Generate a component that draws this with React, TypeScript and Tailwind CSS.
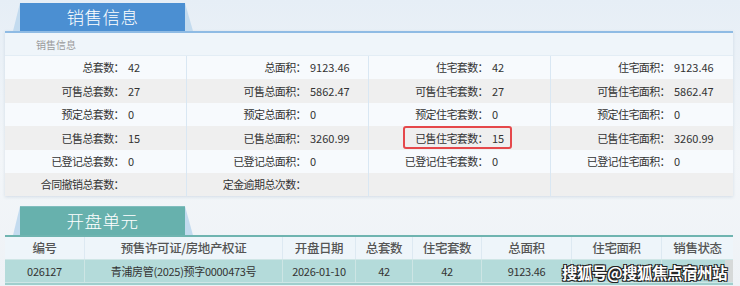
import type { ReactNode } from 'react';

type Cell = { label: string; value: string };

const salesRows: Cell[][] = [
  [
    { label: '总套数：', value: '42' },
    { label: '总面积：', value: '9123.46' },
    { label: '住宅套数：', value: '42' },
    { label: '住宅面积：', value: '9123.46' },
  ],
  [
    { label: '可售总套数：', value: '27' },
    { label: '可售总面积：', value: '5862.47' },
    { label: '可售住宅套数：', value: '27' },
    { label: '可售住宅面积：', value: '5862.47' },
  ],
  [
    { label: '预定总套数：', value: '0' },
    { label: '预定总面积：', value: '0' },
    { label: '预定住宅套数：', value: '0' },
    { label: '预定住宅面积：', value: '0' },
  ],
  [
    { label: '已售总套数：', value: '15' },
    { label: '已售总面积：', value: '3260.99' },
    { label: '已售住宅套数：', value: '15' },
    { label: '已售住宅面积：', value: '3260.99' },
  ],
  [
    { label: '已登记总套数：', value: '0' },
    { label: '已登记总面积：', value: '0' },
    { label: '已登记住宅套数：', value: '0' },
    { label: '已登记住宅面积：', value: '0' },
  ],
  [
    { label: '合同撤销总套数：', value: '' },
    { label: '定金逾期总次数：', value: '' },
    { label: '', value: '' },
    { label: '', value: '' },
  ],
];

const unitCols = [
  { title: '编号', width: 'w-[80px]', value: '026127' },
  { title: '预售许可证/房地产权证', width: 'w-[198px]', value: '青浦房管(2025)预字0000473号' },
  { title: '开盘日期', width: 'w-[73px]', value: '2026-01-10' },
  { title: '总套数', width: 'w-[57px]', value: '42' },
  { title: '住宅套数', width: 'w-[69px]', value: '42' },
  { title: '总面积', width: 'w-[90px]', value: '9123.46' },
  { title: '住宅面积', width: 'w-[90px]', value: '' },
  { title: '销售状态', width: 'w-[71px]', value: '' },
];

function Tab({ title, tone }: { title: string; tone: 'blue' | 'teal' }) {
  return (
    <div className="pl-[8px]">
      <div className="w-[180px] h-full bg-[#c3dbef] [clip-path:polygon(7px_0,172px_0,180px_100%,0_100%)] pl-[7px] pr-[8px]">
        <div
          className={
            tone === 'blue'
              ? 'h-full bg-[#4b8fd2] flex items-center justify-center text-white text-[17.5px] font-light tracking-[0.5px]'
              : 'h-full bg-[#67b1ad] flex items-center justify-center text-white text-[17.5px] font-light tracking-[0.5px]'
          }
        >
          {title}
        </div>
      </div>
    </div>
  );
}

function InfoCell({ cell, last, children }: { cell: Cell; last: boolean; children?: ReactNode }) {
  return (
    <div className={last ? 'relative flex w-[182px] items-center' : 'relative flex w-[182px] items-center border-r border-[#d9e7f3]'}>
      <div className="w-[119px] text-right tracking-[-0.6px] text-[#333]">{cell.label}</div>
      <div className="pl-[4px] text-[#333]">{cell.value}</div>
      {children}
    </div>
  );
}

export default function App() {
  return (
    <div className="w-[740px] h-[286px] overflow-hidden bg-[linear-gradient(180deg,#e6eef6_0%,#f3f6f9_55%,#eef2f6_100%)] pt-[3px] pl-[5px] font-['Noto_Sans_CJK_SC','Noto_Sans',sans-serif] text-[11px]">
      {/* 销售信息 */}
      <div className="h-[28px] flex">
        <Tab title="销售信息" tone="blue" />
      </div>
      <div className="w-[728px] border-t-2 border-[#8fbbe4] bg-[#f7fafd] shadow-[0_1px_3px_rgba(120,150,180,0.25)]">
        <div className="h-[23px] flex items-center pl-[31px] text-[10px] text-[#9a9a9a] bg-[#eff5fa] border-b border-[#e3edf5]">
          销售信息
        </div>
        {salesRows.map((row, r) => (
          <div key={r} className={r % 2 === 1 ? 'flex h-[23.4px] bg-[#efefef]' : 'flex h-[23.4px] bg-[#f7fafd]'}>
            {row.map((cell, c) => (
              <InfoCell key={c} cell={cell} last={c === 3}>
                {r === 3 && c === 2 && (
                  <div className="absolute top-0 left-[34px] w-[109px] h-[23px] border-2 border-[#e5484b] rounded-[3px]" />
                )}
              </InfoCell>
            ))}
          </div>
        ))}
      </div>

      {/* 开盘单元 */}
      <div className="h-[29px] flex mt-[10px]">
        <Tab title="开盘单元" tone="teal" />
      </div>
      <div className="relative w-[728px] border-t-2 border-[#6fb4b0]">
        <div className="flex h-[22px] bg-[#eef5fa]">
          {unitCols.map((col, i) => (
            <div
              key={i}
              className={
                i === unitCols.length - 1
                  ? col.width + ' flex items-center justify-center text-[12.5px] font-medium text-[#555] tracking-[-0.4px]'
                  : col.width + ' flex items-center justify-center text-[12.5px] font-medium text-[#555] tracking-[-0.4px] border-r border-[#dde9f2]'
              }
            >
              {col.title}
            </div>
          ))}
        </div>
        <div className="flex h-[24px] bg-[#b4dbda] border-y border-[#cfe6e6]">
          {unitCols.map((col, i) => (
            <div
              key={i}
              className={
                i === unitCols.length - 1
                  ? col.width + ' flex items-center justify-end'
                  : col.width + ' flex items-center justify-center text-[#333] tracking-[-0.3px] border-r border-[#cde5e4]'
              }
            >
              {i === unitCols.length - 1 ? <div className="w-[8px] h-full bg-[#d6d9d9]" /> : col.value}
            </div>
          ))}
        </div>
        <div className="h-[2px] bg-[#9fcfcd]" />

        {/* watermark */}
        <div className="absolute left-[557px] top-[23px] h-[24px] flex items-center text-[15.5px] font-bold text-white tracking-[-0.5px] [text-shadow:1px_1px_0_#222,-1px_-1px_0_#222,1px_-1px_0_#222,-1px_1px_0_#222]">
          搜狐号@搜狐焦点宿州站
        </div>
      </div>
    </div>
  );
}
